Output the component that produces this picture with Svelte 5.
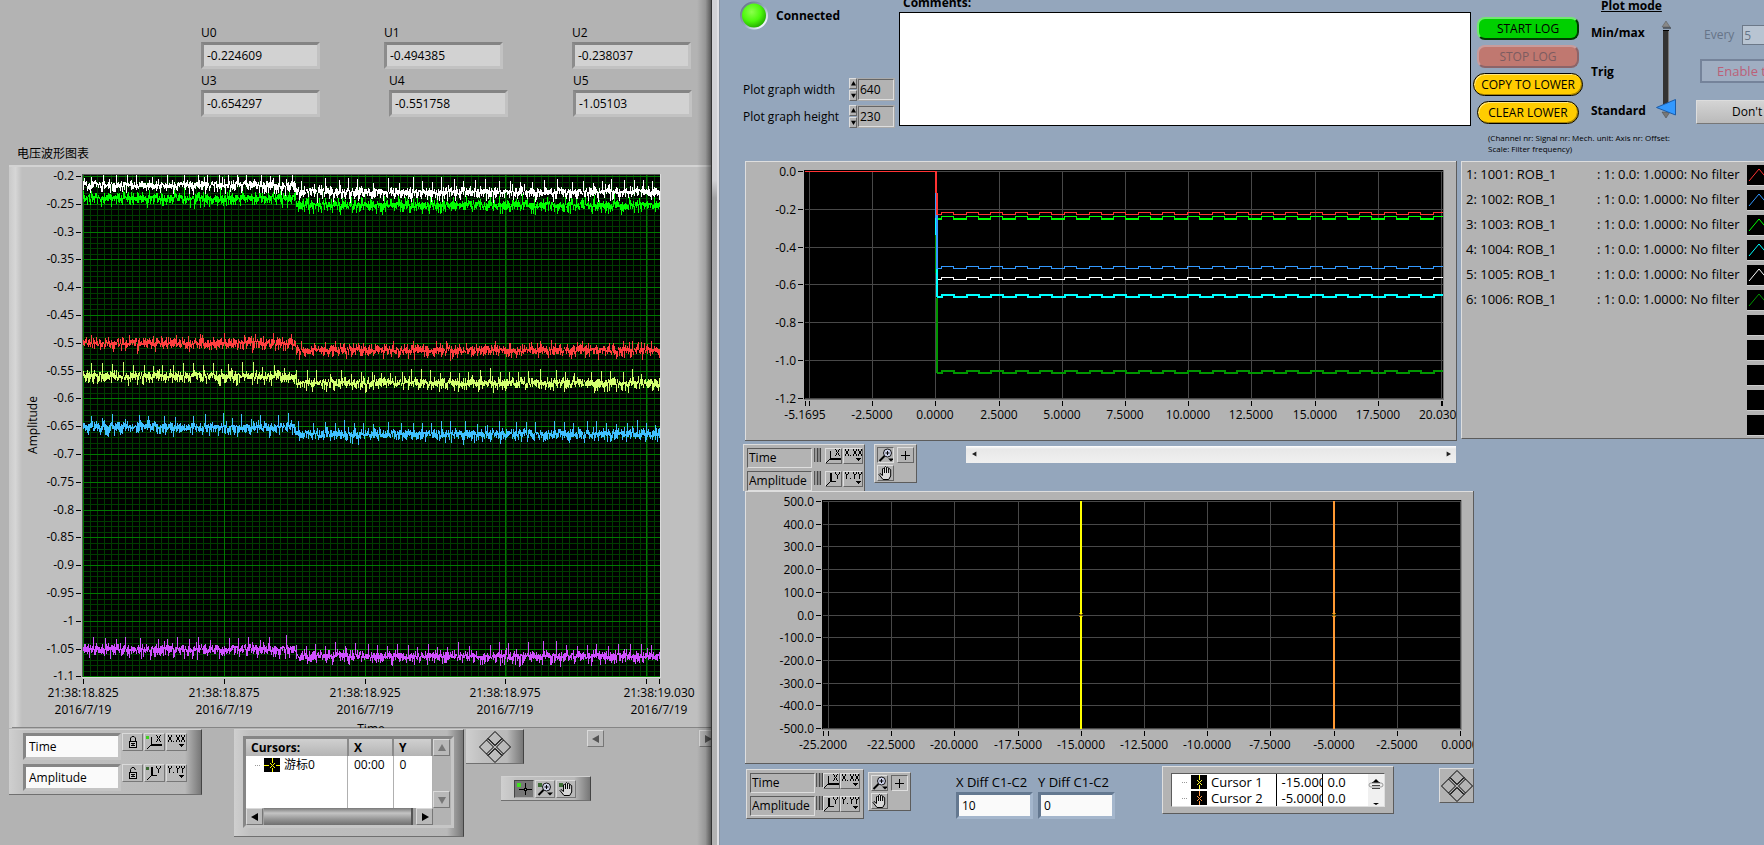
<script>
  const voltages = [
    [['U0', '-0.224609'], ['U1', '-0.494385'], ['U2', '-0.238037']],
    [['U3', '-0.654297'], ['U4', '-0.551758'], ['U5', '-1.05103']]
  ];

  // Small deterministic generator so that the traces are stable between renders.
  function makeRandom(seed) {
    let s = seed;
    return () => {
      s = (s * 1664525 + 1013904223) % 4294967296;
      return s / 4294967296;
    };
  }

  // Each pixel column is a vertical bar from the lowest to the highest sample in it.
  function noisy(base, seed, up) {
    const r = makeRandom(seed);
    let d = '';
    let sinceSpike = 0;
    for (let x = 83; x < 660; x++) {
      const mid = base + (x < 296 ? 0 : 7) + Math.round((r() - 0.5) * 4);
      let top = 1 + Math.floor(r() * 3);
      let bottom = 1 + Math.floor(r() * 4);
      const k = r();
      sinceSpike += 1;
      if (sinceSpike > 8 && k < 0.3) {
        top = up - Math.floor(r() * 4);
        sinceSpike = 0;
      } else if (k < 0.25) top = 4 + Math.floor(r() * 3);
      else if (k > 0.9) bottom = 7 + Math.floor(r() * 3);
      else if (k > 0.72) bottom = 5 + Math.floor(r() * 2);
      d += `M${x + 0.5} ${Math.max(175, mid - top)}V${mid + bottom}`;
    }
    return d;
  }

  const strip = [
    ['#00ff00', noisy(198, 11, 9)],
    ['#ffffff', noisy(185, 5, 13)],
    ['#ff4040', noisy(343, 23, 9)],
    ['#d2ff70', noisy(376, 37, 13)],
    ['#40c0ff', noisy(427, 51, 13)],
    ['#d050ff', noisy(649, 77, 13)]
  ];
  const stripY = Array.from({ length: 19 }, (_, i) => ({
    y: Math.round(176 + i * 27.8),
    t: String(-(20 + i * 5) / 100)
  }));
  const minorY = Array.from({ length: 90 }, (_, i) => Math.round(176 + i * 5.56));
  const minorX = Array.from({ length: 82 }, (_, i) => Math.round(83 + i * 7.05));
  const stripX = [83, 224, 365, 505, 646];
  const stripLabels = [
    [83, '21:38:18.825'], [224, '21:38:18.875'], [365, '21:38:18.925'],
    [505, '21:38:18.975'], [659, '21:38:19.030']
  ];

  function square(high, low) {
    let d = `M937 ${low + 0.5}H941`;
    for (let i = 0; i < 21; i++) {
      const a = Math.round(941 + i * 24.6);
      d += `H${a + 0.5}V${high + 0.5}H${Math.min(a + 12.5, 1443)}`;
      if (a + 12 < 1443) d += `V${low + 0.5}`;
    }
    return d;
  }
  const upper = [
    ['#009600', square(370, 372), 2],
    ['#00ffff', square(294, 296), 2],
    ['#ffffff', square(277, 279), 1],
    ['#3399ff', square(266, 268), 1],
    ['#00ff00', square(216, 218), 1],
    ['#00ff00', square(216, 219), 1],
    ['#ff3333', square(212, 214), 1]
  ];
  const upperY = ['0.0', '-0.2', '-0.4', '-0.6', '-0.8', '-1.0', '-1.2'].map((t, i) => ({ t, y: Math.round(171 + i * 37.8) }));
  const upperX = ['', '-2.5000', '0.0000', '2.5000', '5.0000', '7.5000', '10.0000', '12.5000', '15.0000', '17.5000', ''].map(
    (t, i) => ({ t, x: Math.round(809 + i * 63.2) })
  );
  const lowerY = Array.from({ length: 11 }, (_, i) => ({ t: (500 - i * 100).toFixed(1), y: Math.round(501 + i * 22.7) }));
  const lowerX = ['', '-22.5000', '-20.0000', '-17.5000', '-15.0000', '-12.5000', '-10.0000', '-7.5000', '-5.0000', '-2.5000', '0.0000'].map(
    (t, i) => ({ t, x: Math.round(828 + i * 63.2) })
  );

  const channels = ['#ff3333', '#3399ff', '#00ff00', '#00ffff', '#ffffff', '#009600', '', '', '', '', ''];
  const cursors = [['Cursor 1', '-15.0000', '0.0', '#ffff33'], ['Cursor 2', '-5.0000', '0.0', '#ff9944']];
</script>

{#snippet axisIcon(axis, led)}
  <svg width="17" height="14" viewBox="0 0 17 14" aria-hidden="true" shape-rendering="crispEdges">
    {#if led}<rect x="0" y="1" width="3" height="3" fill={led} />{/if}
    {#if axis === 'X'}
      <rect x="5" y="2" width="1" height="8" /><rect x="5" y="9" width="11" height="2" />
      <path d="M10 0h1v1h-1zM11 1h1v2h-1zM12 3h1v1h-1zM13 1h1v2h-1zM14 0h1v1h-1zM11 4h1v2h-1zM10 6h1v1h-1zM13 4h1v2h-1zM14 6h1v1h-1z" />
    {:else}
      <rect x="5" y="1" width="2" height="9" /><rect x="5" y="9" width="6" height="1" />
      <path d="M10 0h1v2h-1zM11 2h1v1h-1zM12 3h1v4h-1zM13 2h1v1h-1zM14 0h1v2h-1z" />
    {/if}
    <path d="M4 10h1v1H4zM3 11h1v1H3zM2 12h1v1H2zM1 13h1v1H1z" />
  </svg>
{/snippet}

{#snippet formatIcon(axis)}
  <svg width="17" height="14" viewBox="0 0 17 14" aria-hidden="true" shape-rendering="crispEdges">
    {#each [0, 8, 13] as x}
      {#if axis === 'X'}
        <path transform="translate({x} 0)" d="M0 0h1v2H0zM3 0h1v2H3zM1 2h2v3H1zM0 5h1v2H0zM3 5h1v2H3z" />
      {:else}
        <path transform="translate({x} 0)" d="M0 0h1v2H0zM3 0h1v2H3zM1 2h2v1H1zM1 3h1v4H1z" />
      {/if}
    {/each}
    <rect x="5" y="6" width="1" height="1" /><path d="M11 9h5v1h-1v1h-1v1h-1v-1h-1v-1h-1z" />
  </svg>
{/snippet}

{#snippet lockIcon(open)}
  <svg width="12" height="14" viewBox="0 0 12 14" aria-hidden="true">
    <path d={open ? 'M3.500 7V3.500L5 1.500h2L8.500 4' : 'M3.500 7V3L5 1.500h2L8.500 3v4'} fill="none" stroke="#000" />
    <rect x="2.500" y="6.500" width="7" height="6" fill="#c8c8c8" stroke="#000" />
    <path d="M4 8.500h4M4 10.500h4M6 8v3" stroke="#000" />
  </svg>
{/snippet}

{#snippet zoomIcon()}
  <svg width="16" height="14" viewBox="0 0 16 14" aria-hidden="true">
    <circle cx="9.500" cy="5" r="4" fill="#d0d4ec" stroke="#111" />
    <path d="M9.500 3v4M7.500 5h4" stroke="#000" /><path d="M6.500 8L1.500 13" stroke="#000" stroke-width="2" /><path d="M10 10.500h6l-3 3z" />
  </svg>
{/snippet}

{#snippet handIcon()}
  <svg width="15" height="14" viewBox="0 0 15 14" aria-hidden="true">
    <path d="M5 13.500L1 8.500l1-1 2.500 2V3l1-1 1 1V1.500l1-1 1 1V2l1-1 1.200 1v1.500l1-.8 1 1V10l-2 3.500z" fill="#d8d8d8" stroke="#000" />
    <path d="M6.500 3v4M8.500 2v5M10.600 3v4" stroke="#000" />
  </svg>
{/snippet}

{#snippet crossIcon(c)}
  <svg width="15" height="14" viewBox="0 0 15 14" aria-hidden="true">
    <path d="M8.500 1v12M2 7.500h13" stroke={c} /><rect x="7" y="6" width="3" height="3" /><rect x="8" y="7" width="1" height="1" fill="#999" />
  </svg>
{/snippet}

{#snippet diamonds()}
  <svg width="32" height="32" viewBox="0 0 32 32" aria-hidden="true">
    <g fill="none" stroke="#000">
      <path d="M16 .500l7 7-7 7-7-7zM16 17.500l7 7-7 7-7-7zM7.500 9l7 7-7 7-7-7zM24.500 9l7 7-7 7-7-7z" />
      <path d="M7.500 9L9 7.500l7 7 7-7L24.500 9M7.500 23L9 24.500l7-7 7 7 1.500-1.500" />
    </g>
  </svg>
{/snippet}

{#snippet tri(dir, c)}
  <svg width="8" height="8" viewBox="0 0 8 8" aria-hidden="true">
    <path fill={c} d={dir === 'l' ? 'M7 0v8L0 4z' : dir === 'r' ? 'M1 0v8l7-4z' : dir === 'u' ? 'M0 7h8L4 0z' : 'M0 1h8L4 8z'} />
  </svg>
{/snippet}

{#snippet cursorIcon(c, cross)}
  <svg width="16" height="14" viewBox="0 0 16 14" aria-hidden="true">
    <rect width="16" height="14" />
    <path d={cross ? 'M8.500 0v5M8.500 10v4M0 7.500h5M12 7.500h4' : 'M8.500 0v5M8.500 10v4'} stroke={c} />
    <path d="M6 5l5 5M11 5l-5 5" stroke={c} />
  </svg>
{/snippet}

{#snippet scaleLegend(tight)}
  <div class="scale-legend bevel" class:tight>
    {#each [['Time', 'X'], ['Amplitude', 'Y']] as [name, axis]}
      <input class="sunk" value={name} aria-label="{axis} scale name" />
      <button class="lockbar" aria-label="Lock {axis} scale"></button>
      <button class="tool" aria-label="Autoscale {axis}">{@render axisIcon(axis, '')}</button>
      <button class="tool" aria-label="{axis} format">{@render formatIcon(axis)}</button>
    {/each}
  </div>
{/snippet}

{#snippet graphPalette(crossOn)}
  <div class="palette bevel">
    <button class="tool" class:pressed={!crossOn} aria-label="Zoom">{@render zoomIcon()}</button>
    <button class="tool" class:pressed={crossOn} aria-label="Cursor">
      <svg width="15" height="14" viewBox="0 0 15 14" aria-hidden="true"><path d="M7.500 3v9M3 7.500h9" stroke="#000" /></svg>
    </button>
    <button class="tool" aria-label="Pan">{@render handIcon()}</button>
  </div>
{/snippet}

<main class="screen">
  <section class="left">
    {#each voltages as row, i}
      <div class="volts" class:second={i === 1}>
        {#each row as [name, value]}
          <label>{name}<input value={value} readonly /></label>
        {/each}
      </div>
    {/each}
    <h2>电压波形图表</h2>

    <svg class="chart" viewBox="9 165 702 563" role="img" aria-label="Voltage waveform chart">
      <defs>
        <linearGradient id="edge"><stop offset="0" stop-color="#cacaca" /><stop offset=".5" stop-color="#d6d6d6" /><stop offset="1" stop-color="#bfbfbf" /></linearGradient>
      </defs>
      <rect x="9" y="165" width="702" height="563" fill="#bfbfbf" />
      <rect x="9" y="165" width="13" height="563" fill="url(#edge)" />
      <rect x="9" y="165" width="702" height="2" fill="#d3d3d3" />
      <rect x="12" y="727" width="699" height="1" fill="#858585" />
      <rect x="82" y="174" width="579" height="504" fill="#dcdcdc" />
      <rect x="82" y="174" width="578" height="503" fill="#555" />
      <rect x="83" y="175" width="577" height="502" />
      <g shape-rendering="crispEdges">
        {#each minorX as x}<rect {x} y="175" width="1" height="502" fill="#003c00" />{/each}
        {#each minorY as y}<rect x="83" {y} width="577" height="1" fill="#003c00" />{/each}
        {#each stripX as x}
          <rect {x} y="175" width="1" height="502" fill="#007800" />
          <rect {x} y="679" width="1" height="5" />
        {/each}
        <rect x="659" y="679" width="1" height="5" />
        {#each stripY as t}
          <rect x="83" y={t.y} width="577" height="1" fill="#007800" />
          <rect x="76" y={t.y} width="5" height="1" />
        {/each}
        {#each strip as [c, d]}<path {d} fill="none" stroke={c} />{/each}
      </g>
      {#each stripY as t}<text x="74" y={t.y + 4} text-anchor="end">{t.t}</text>{/each}
      {#each stripLabels as [x, t]}
        <text {x} y="697" text-anchor="middle">{t}</text>
        <text {x} y="714" text-anchor="middle">2016/7/19</text>
      {/each}
      <text x="371" y="733" text-anchor="middle">Time</text>
      <text transform="translate(37 425) rotate(-90)" text-anchor="middle">Amplitude</text>
    </svg>

    <div class="left-tools">
      <div class="raised names">
        {#each [['Time', 'X', '#40d020', false], ['Amplitude', 'Y', '#3c6a34', true]] as [name, axis, led, open]}
          <input value={name} aria-label="{axis} axis name" />
          <button class="soft" aria-label="Lock {axis}">{@render lockIcon(open)}</button>
          <button class="soft" aria-label="Autoscale {axis} axis">{@render axisIcon(axis, led)}</button>
          <button class="soft" aria-label="Format {axis} axis">{@render formatIcon(axis)}</button>
        {/each}
      </div>

      <div class="raised cursor-box">
        <div class="cursor-frame">
          <table>
            <thead><tr><th>Cursors:</th><th>X</th><th>Y</th></tr></thead>
            <tbody><tr>
              <td class="name"><i></i>{@render cursorIcon('#ffff00', true)}<span>游标0</span></td><td>00:00</td><td>0</td>
            </tr></tbody>
          </table>
          <div class="vscroll">
            <button class="soft" aria-label="Scroll up">{@render tri('u', '#777')}</button>
            <button class="soft" aria-label="Scroll down">{@render tri('d', '#777')}</button>
          </div>
          <div class="hscroll">
            <button class="soft" aria-label="Scroll left">{@render tri('l', '#000')}</button>
            <div class="thumb"></div>
            <button class="soft" aria-label="Scroll right">{@render tri('r', '#000')}</button>
          </div>
        </div>
      </div>

      <div class="side">
        <div class="side-top">
          <button class="raised mover" aria-label="Move cursor">{@render diamonds()}</button>
          <button class="soft" aria-label="Page left">{@render tri('l', '#555')}</button>
          <button class="soft last" aria-label="Page right">{@render tri('r', '#555')}</button>
        </div>
        <div class="raised trio">
          <button class="soft on" aria-label="Cursor tool"><b class="lit"></b>{@render crossIcon('#000')}</button>
          <button class="soft" aria-label="Zoom tool"><b></b>{@render zoomIcon()}</button>
          <button class="soft" aria-label="Pan tool"><b></b>{@render handIcon()}</button>
        </div>
      </div>
    </div>
  </section>

  <div class="splitter"></div>

  <section class="right">
    <header>
      <div class="status">
        <div class="connected">
          <svg width="30" height="31" viewBox="0 0 30 31" aria-hidden="true">
            <defs>
              <radialGradient id="led" cx=".4" cy=".35" r=".65"><stop offset="0" stop-color="#8cff4c" /><stop offset=".6" stop-color="#4cf80c" /><stop offset="1" stop-color="#28b400" /></radialGradient>
              <linearGradient id="rim" x2="1" y2="1"><stop offset=".15" stop-color="#6c7c90" /><stop offset=".5" stop-color="#94a6bc" /><stop offset=".85" stop-color="#f4f8ff" /></linearGradient>
            </defs>
            <circle cx="15" cy="15.500" r="14" fill="url(#rim)" /><circle cx="15" cy="15.500" r="12" fill="url(#led)" />
          </svg>
          <strong>Connected</strong>
        </div>
        {#each [['width', '640'], ['height', '230']] as [dim, v]}
          <div class="dim">
            <label for="plot-{dim}">Plot graph {dim}</label>
            <span class="spin">
              <button aria-label="Increase {dim}">{@render tri('u', '#000')}</button>
              <button aria-label="Decrease {dim}">{@render tri('d', '#000')}</button>
            </span>
            <input id="plot-{dim}" value={v} />
          </div>
        {/each}
      </div>

      <div class="comments">
        <label for="comments">Comments:</label>
        <textarea id="comments"></textarea>
      </div>

      <div class="controls">
        <div class="control-row">
          <div class="log-buttons">
            <button class="start">START LOG</button>
            <button class="stop" disabled>STOP LOG</button>
            <button class="copy">COPY TO LOWER</button>
            <button class="clear">CLEAR LOWER</button>
          </div>
          <div class="mode">
            <label class="mode-title" for="mode">Plot mode</label>
            <div class="mode-body">
              <div class="mode-names"><span>Min/max</span><span>Trig</span><span>Standard</span></div>
              <div class="slider">
                <svg width="22" height="98" viewBox="0 0 22 98" aria-hidden="true">
                  <path d="M11 0l4 6H7z" fill="#888" stroke="#555" stroke-width=".5" /><path d="M8 7h8" stroke="#222" />
                  <rect x="8" y="9" width="6" height="74" fill="#333" /><path d="M13.500 9v74" stroke="#777" /><path d="M8 9.500h6" stroke="#000" />
                  <path d="M7 91h8l-4 6z" fill="#777" stroke="#444" stroke-width=".5" />
                  <path d="M1.500 86.500L20.500 78.500v15.500z" fill="#3399ff" stroke="#1c5ca8" />
                </svg>
                <input id="mode" type="range" min="0" max="2" value="0" />
              </div>
            </div>
          </div>
          <div class="trigger">
            <div class="every"><label for="every">Every</label><input id="every" value="5" disabled /></div>
            <button class="enable" disabled>Enable trig</button>
            <button class="dont">Don't save</button>
          </div>
        </div>
        <p>(Channel nr: Signal nr: Mech. unit: Axis nr: Offset:<br />Scale: Filter frequency)</p>
      </div>
    </header>

    <div class="upper">
      <svg class="chart" viewBox="745 161 712 280" role="img" aria-label="Logged signals">
        <rect x="745" y="161" width="712" height="280" fill="#5c5c5c" />
        <rect x="745" y="161" width="711" height="279" fill="#dedede" />
        <rect x="746" y="162" width="710" height="278" fill="#b3b3b3" />
        <rect x="804" y="170" width="640" height="230" fill="#777" />
        <rect x="804" y="170" width="639" height="229" />
        <g shape-rendering="crispEdges">
          {#each upperX as t}<rect x={t.x} y="171" width="1" height="228" fill="#484848" /><rect x={t.x} y="401" width="1" height="5" />{/each}
          {#each upperY as t}<rect x="805" y={t.y} width="638" height="1" fill="#484848" /><rect x="798" y={t.y} width="5" height="1" />{/each}
          <rect x="805" y="401" width="1" height="5" /><rect x="1442" y="401" width="1" height="5" />
          {#each upper as [c, d, w]}<path {d} fill="none" stroke={c} stroke-width={w} />{/each}
          <rect x="935" y="235" width="1" height="38" fill="#009600" />
          <rect x="936" y="298" width="2" height="75" fill="#009600" />
          <rect x="935" y="218" width="1" height="17" fill="#00ffff" />
          <rect x="936" y="268" width="2" height="29" fill="#00ffff" />
          <rect x="935" y="193" width="1" height="25" fill="#3399ff" />
          <rect x="936" y="193" width="2" height="76" fill="#3399ff" />
          <rect x="805" y="171" width="132" height="1" fill="#ff3333" />
          <rect x="935" y="171" width="2" height="22" fill="#ff3333" />
          <rect x="936" y="193" width="2" height="22" fill="#ff3333" />
        </g>
        {#each upperY as t}<text x="796" y={t.y + 5} text-anchor="end">{t.t}</text>{/each}
        <text x="805" y="419" text-anchor="middle">-5.1695</text>
        {#each upperX as t}<text x={t.x} y="419" text-anchor="middle">{t.t}</text>{/each}
        <text x="1419" y="419">20.030</text>
      </svg>
      <ul class="channels bevel">
        {#each channels as c, i}
          <li>
            {#if c}<span>{i + 1}: {1001 + i}: ROB_1</span><span>: 1: 0.0: 1.0000: No filter</span>{/if}
            <button aria-label="Plot style {i + 1}">
              {#if c}<svg width="26" height="20" viewBox="0 0 26 20" aria-hidden="true"><path d="M2 16L12 4l10 12" fill="none" stroke={c} /></svg>{/if}
            </button>
          </li>
        {/each}
      </ul>
    </div>

    <div class="toolrow">
      {@render scaleLegend(false)}
      {@render graphPalette(false)}
      <div class="scrollbar">
        <button aria-label="Scroll left">{@render tri('l', '#222')}</button>
        <button aria-label="Scroll right">{@render tri('r', '#222')}</button>
      </div>
    </div>

    <div class="lower">
      <svg class="chart" viewBox="745 491 729 273" role="img" aria-label="Cursor comparison">
        <rect x="745" y="491" width="729" height="273" fill="#5c5c5c" />
        <rect x="745" y="491" width="728" height="272" fill="#dedede" />
        <rect x="746" y="492" width="727" height="271" fill="#b3b3b3" />
        <rect x="822" y="500" width="640" height="230" fill="#888" />
        <rect x="822" y="500" width="639" height="229" />
        <g shape-rendering="crispEdges">
          {#each lowerX as t}<rect x={t.x} y="501" width="1" height="228" fill="#484848" /><rect x={t.x} y="731" width="1" height="5" />{/each}
          {#each lowerY as t}<rect x="823" y={t.y} width="638" height="1" fill="#484848" /><rect x="816" y={t.y} width="5" height="1" />{/each}
          <rect x="823" y="731" width="1" height="5" />
          <rect x="1080" y="501" width="2" height="228" fill="#ffff00" /><rect x="1333" y="501" width="2" height="228" fill="#ff9933" />
        </g>
        <path d="M1079 613l4 4M1083 613l-4 4M1332 613l4 4M1336 613l-4 4" stroke="#a07800" />
        {#each lowerY as t}<text x="814" y={t.y + 5} text-anchor="end">{t.t}</text>{/each}
        <text x="823" y="749" text-anchor="middle">-25.2000</text>
        {#each lowerX as t}<text x={t.x} y="749" text-anchor="middle">{t.t}</text>{/each}
        <rect x="1473" y="740" width="1" height="14" fill="#5c5c5c" />
      </svg>
    </div>

    <footer>
      {@render scaleLegend(true)}
      {@render graphPalette(true)}
      <div class="diffs">
        <label>X Diff C1-C2<input value="10" /></label>
        <label>Y Diff C1-C2<input value="0" /></label>
      </div>
      <div class="cursor-list bevel">
        <div class="cursor-inner">
          <table>
            <colgroup><col class="c-name" /><col class="c-x" /><col /></colgroup>
            <tbody>
              {#each cursors as [name, x, y, c]}
                <tr><td><div><i></i>{@render cursorIcon(c, false)}<span>{name}</span></div></td><td>{x}</td><td>{y}</td></tr>
              {/each}
            </tbody>
          </table>
          <div class="mini">
            <svg width="16" height="32" viewBox="0 0 16 32" aria-hidden="true">
              <path d="M8 5l4 4H4z" /><rect x="1" y="9" width="14" height="4" rx="2" fill="#eee" stroke="#999" />
              <path d="M4 8.500h8M4 11.500h8M4 14.500h8" stroke="#444" /><path d="M5 29h6l-3 2z" />
            </svg>
          </div>
        </div>
      </div>
      <button class="bevel mover2" aria-label="Move selected cursor">{@render diamonds()}</button>
    </footer>
  </section>
</main>

<style>
  :global(body) { background: #b3b3b3; }
  .screen {
    display: grid;
    grid-template-columns: 711fr 9px 1044fr;
    min-height: 100vh;
    overflow: hidden;
    font: 12px/16px 'Open Sans', 'Noto Sans', 'Noto Sans CJK SC', sans-serif;
    color: #000;
  }
  .screen * { box-sizing: border-box; }
  button, input, textarea { font: inherit; color: inherit; margin: 0; padding: 0; border: 0; border-radius: 0; }
  button { display: flex; align-items: center; justify-content: center; background: none; overflow: hidden; }
  button svg { flex: none; }
  svg { display: block; }
  .chart { width: 100%; height: auto; }
  text { font-size: 12px; }

  .left { position: relative; min-width: 0; padding-top: 25px; background: #b3b3b3; overflow: hidden; }
  .left::after {
    content: ''; position: absolute; top: 0; right: 0; bottom: 0; width: 14px; pointer-events: none;
    background: linear-gradient(90deg, transparent, rgb(0 0 0 / .16) 60%, rgb(0 0 0 / .5));
  }
  .volts { display: grid; grid-template-columns: 183px 188px 119px; padding-left: 201px; }
  .volts.second { grid-template-columns: 188px 184px 119px; margin-top: 4px; }
  .volts input {
    display: block; width: 119px; height: 27px; margin-top: 1px; padding: 0 3px; background: #d2d2d2;
    border: 3px solid; border-color: #848484 #c2c2c2 #c2c2c2 #8c8c8c;
  }
  h2 { margin: 29px 0 3px 17px; font-size: 12px; line-height: 16px; font-weight: 400; }
  .left > .chart { width: auto; margin-left: 9px; }
  .left-tools { display: flex; align-items: flex-start; padding: 1px 0 0 9px; }
  .raised {
    background: linear-gradient(90deg, #cfcfcf, #c0c0c0 16px, #b9b9b9 calc(100% - 16px), #777);
    border-top: 1px solid #d0d0d0; border-right: 1px solid #444; border-bottom: 1px solid #707070;
  }
  .soft {
    width: 21px; height: 18px; background: #b9b9b9;
    border: 1px solid; border-color: #dadada #777 #777 #dadada;
  }
  .names {
    flex: none; width: 193px; height: 66px; padding: 3px 13px 3px 14px;
    display: grid; grid-template-columns: 98px 21px 21px 21px; column-gap: 1px; row-gap: 4px; align-items: start;
  }
  .names input {
    height: 27px; padding: 0 3px; background: #fafafa;
    border: 3px solid; border-color: #858585 #c4c4c4 #c4c4c4 #858585;
  }
  .cursor-box { flex: none; width: 230px; height: 108px; margin-left: 32px; padding: 6px 9px; }
  .cursor-frame {
    display: grid; grid-template-columns: 187px 18px; grid-template-rows: 69px 17px;
    border: 3px solid; border-color: #868686 #c6c6c6 #c6c6c6 #868686; background: #b3b3b3;
  }
  .cursor-frame table { width: 187px; height: 69px; table-layout: fixed; border-collapse: collapse; background: #fff; }
  th { height: 17px; padding: 0 5px; text-align: left; line-height: 14px; background: linear-gradient(#d0d0d0, #b4b4b4); border-right: 2px solid #8a8a8a; }
  .cursor-frame th:nth-child(1) { width: 102px; }
  .cursor-frame th:nth-child(2) { width: 45px; }
  .cursor-frame td { padding: 1px 6px; vertical-align: top; border-right: 1px solid #b0b0b0; }
  .cursor-frame td.name { display: flex; align-items: center; gap: 4px; height: 52px; padding: 0 0 34px 9px; }
  td i { width: 9px; border-top: 1px dotted #999; }
  .cursor-frame td i { width: 5px; }
  .vscroll { display: flex; flex-direction: column; justify-content: space-between; }
  .vscroll .soft { width: 17px; height: 17px; }
  .hscroll { display: flex; width: 187px; background: #a0a0a0; }
  .hscroll .soft { width: 17px; height: 17px; }
  .thumb { flex: 1; margin: 0 3px 0 1px; background: linear-gradient(#787878, #c4c4c4 30%, #909090 70%, #707070); border-right: 2px solid #555; }
  .side { flex: 1; min-width: 0; margin-left: 2px; }
  .side-top { display: flex; align-items: flex-start; }
  .side-top .soft { flex: none; width: 17px; height: 17px; margin: 1px 0 0 63px; }
  .side-top .last { margin-left: 95px; }
  .mover { flex: none; width: 58px; height: 35px; }
  .trio { display: flex; gap: 1px; width: 90px; height: 25px; margin: 12px 0 0 35px; padding: 3px 0 0 13px; }
  .trio .soft { position: relative; width: 20px; }
  .trio .on { background: #777; border-color: #444 #aaa #aaa #444; }
  .trio b { position: absolute; left: 2px; top: 2px; width: 4px; height: 4px; background: #3c6a34; }
  .trio .lit { background: #40e020; }

  .splitter {
    border-left: 1px solid #333; border-right: 1px solid #8c97a6;
    background: linear-gradient(#d2d2d6 0 180px, #a2a2a4 198px, #b4b4b6 420px, #b3b3b3);
    box-shadow: inset -2px 0 #e0e0e4;
  }

  .right { min-width: 0; padding-left: 23px; background: #94a6bc; overflow: hidden; }
  .bevel { background: #b3b3b3; border: 1px solid; border-color: #dedede #5c5c5c #5c5c5c #dedede; }
  header { display: flex; height: 161px; }
  .status { flex: none; width: 156px; }
  .connected { display: flex; align-items: center; gap: 7px; height: 31px; margin: 0 0 47px -4px; }
  .dim { display: flex; align-items: center; height: 23px; margin-bottom: 4px; }
  .dim label { flex: 1; white-space: nowrap; }
  .spin { display: flex; flex-direction: column; gap: 1px; width: 8px; }
  .spin button { height: 11px; background: #b3b3b3; border: 1px solid; border-color: #dedede #666 #666 #dedede; }
  .spin svg { width: 5px; height: 5px; }
  .dim input { width: 38px; height: 23px; margin-right: 4px; padding: 0 1px; background: #b3b3b3; border: 2px solid; border-color: #666 #dedede #dedede #666; outline: 1px solid #aaa; outline-offset: -1px; }
  .comments { flex: 1; min-width: 0; margin-top: -5px; }
  .comments label { display: block; height: 17px; padding-left: 4px; font-weight: 700; }
  textarea { display: block; width: 100%; height: 114px; border: 1px solid #000; background: #fff; resize: none; }
  .controls { flex: none; width: 293px; overflow: hidden; }
  .control-row { display: flex; height: 127px; }
  .log-buttons { display: flex; flex-direction: column; align-items: center; gap: 5px; width: 114px; padding-top: 17px; }
  .log-buttons button { width: 102px; height: 23px; border: 1px solid #000; border-radius: 12px; background: #fc0; font-size: 12px; white-space: nowrap; box-shadow: inset 1px 1px #ffe680, inset -1px -1px #a88400; }
  .log-buttons .copy { width: 110px; }
  .log-buttons .start { border-color: #70e870 #003c00 #003c00 #70e870; border-width: 2px; border-radius: 8px; background: #00d000; box-shadow: none; }
  .log-buttons .stop { border-color: #c89c9c #8c6468 #8c6468 #c89c9c; border-width: 2px; border-radius: 8px; background: #c07870; color: #7c5c60; box-shadow: none; }
  .mode { width: 95px; margin: -2px 0 0 4px; font-weight: 700; font-size: 12px; }
  .mode-title { display: block; padding-left: 12px; text-decoration: underline; white-space: nowrap; }
  .mode-body { display: flex; }
  .mode-names { display: flex; flex-direction: column; justify-content: space-between; width: 66px; height: 94px; margin-top: 11px; padding-left: 2px; }
  .slider { position: relative; width: 22px; margin-top: 7px; }
  .slider input { position: absolute; inset: 0; width: 22px; height: 98px; opacity: 0; writing-mode: vertical-lr; }
  .trigger { flex: 1; min-width: 0; padding: 25px 0 0 12px; overflow: hidden; white-space: nowrap; }
  .every { display: flex; align-items: center; gap: 8px; padding-left: 8px; color: #667488; }
  .every input { flex: none; width: 50px; height: 20px; padding: 0 1px; background: #b8c4d2; border: 1px solid #6c7888; }
  .trigger button { width: 130px; height: 24px; justify-content: flex-start; }
  .enable { margin: 14px 0 0 4px; padding-left: 15px; border: 2px solid; border-color: #75839a #a9b6c8 #75839a #75839a; color: #bc6078; font-size: 13px; background: #a0aec2; }
  .dont { margin-top: 17px; padding-left: 35px; background: linear-gradient(#d4d4d4, #bababa); border: 1px solid; border-color: #ddd #888 #777 #ddd; }
  .controls p { margin: 5px 0 0 17px; font-size: 8px; line-height: 11px; white-space: nowrap; }

  .upper { display: grid; grid-template-columns: 712fr 303fr; align-items: start; column-gap: 4px; margin-left: 2px; }
  .channels { min-width: 0; margin: 0; padding: 3px 0 0 4px; list-style: none; overflow: hidden; border-right: 0; font-size: 13px; }
  .channels li { display: grid; grid-template-columns: 131px 150px 30px; height: 25px; align-items: start; line-height: 19px; white-space: nowrap; }
  .channels li:last-child { height: 23px; }
  .channels button { grid-column: 3; width: 30px; height: 21px; background: #000; border-bottom: 1px solid #ccc; justify-content: flex-start; }

  .toolrow { display: flex; align-items: flex-start; height: 50px; padding-top: 3px; }
  .scale-legend { flex: none; display: grid; grid-template-columns: 65px 8px 17px 20px; column-gap: 1px; row-gap: 3px; width: 122px; height: 50px; padding: 3px; align-items: start; }
  .scale-legend.tight { width: 118px; column-gap: 0; }
  .toolrow .scale-legend { height: 47px; border-bottom: 0; grid-template-columns: 65px 11px 17px 20px; }
  .sunk { width: 65px; height: 20px; padding: 0 1px 1px; background: #b3b3b3; border: 1px solid; border-color: #5c5c5c #dedede #dedede #5c5c5c; }
  .lockbar { width: 8px; height: 14px; background: linear-gradient(90deg, #b3b3b3 1px, #555 1px 2px, #999 2px 4px, #444 4px 5px, #888 5px 7px, #444 7px); }
  .tool { width: 100%; height: 16px; background: #b3b3b3; border: 1px solid; border-color: #dedede #666 #666 #dedede; }
  .tool.pressed { border-color: #666 #dedede #dedede #666; }
  .palette { flex: none; display: grid; grid-template-columns: 17px 17px; column-gap: 3px; row-gap: 2px; width: 43px; height: 39px; margin-left: 9px; padding: 2px; }
  .scrollbar { flex: 1; display: flex; justify-content: space-between; height: 17px; margin: 2px 308px 0 49px; padding: 0 2px; background: linear-gradient(#fff, #e8e8e8 3px, #f0f0f0); }
  .scrollbar button { width: 12px; height: 15px; }
  .scrollbar svg { width: 5px; height: 6px; }

  .lower { display: grid; grid-template-columns: 729fr 290fr; margin-left: 2px; }
  footer { display: flex; align-items: flex-start; padding: 2px 0 20px 3px; }
  footer .scale-legend { margin-top: 3px; }
  footer .palette { margin: 6px 0 0 4px; }
  .diffs { display: flex; gap: 5px; margin: 8px 0 0 45px; font-size: 13px; }
  .diffs label { width: 77px; white-space: nowrap; }
  .diffs input { display: block; width: 77px; height: 27px; margin-top: 2px; padding: 0 3px; background: #fafafa; border: 3px solid; border-color: #647890 #a4b6cc #a4b6cc #647890; font-size: 12px; }
  .cursor-list { flex: none; width: 232px; height: 48px; margin-left: 47px; padding: 6px 8px; }
  .cursor-inner { display: flex; height: 34px; overflow: hidden; background: #fff; border: 1px solid; border-color: #5c5c5c #dedede #dedede #5c5c5c; }
  .cursor-inner table { width: 197px; table-layout: fixed; border-collapse: collapse; font-size: 13px; }
  .c-name { width: 104px; }
  .c-x { width: 46px; }
  .cursor-inner td { height: 16px; padding: 0 0 0 5px; overflow: hidden; white-space: nowrap; line-height: 16px; }
  .cursor-inner td:nth-child(-n + 2) { border-right: 1px solid #000; }
  .cursor-inner td div { display: flex; align-items: center; gap: 4px; padding-left: 5px; }
  .cursor-inner td i { flex: none; width: 5px; }
  .cursor-inner td svg { flex: none; }
  .mini { flex: none; width: 16px; background: #f0f0f0; }
  .mover2 { flex: none; width: 35px; height: 35px; margin: 2px 0 0 45px; }
</style>
